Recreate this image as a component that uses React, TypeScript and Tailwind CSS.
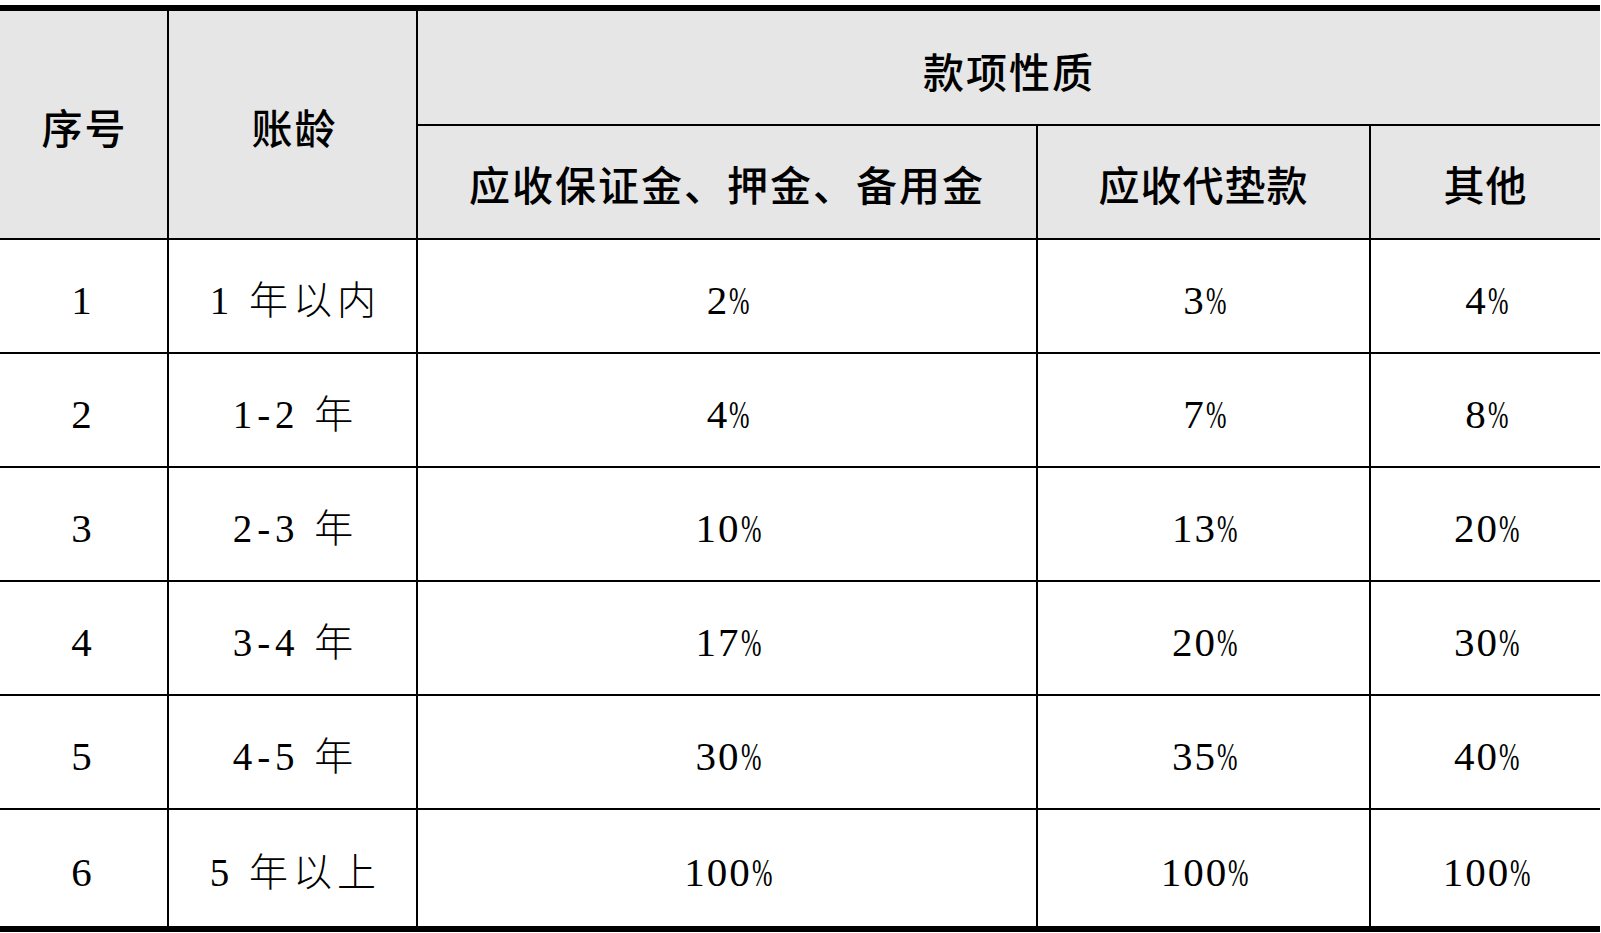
const serif = "font-[family-name:'Liberation_Serif','Times_New_Roman','Noto_Sans_CJK_SC',serif]"

const rows = [
  { no: '1', age: '1 年以内', a: '2', b: '3', c: '4' },
  { no: '2', age: '1-2 年', a: '4', b: '7', c: '8' },
  { no: '3', age: '2-3 年', a: '10', b: '13', c: '20' },
  { no: '4', age: '3-4 年', a: '17', b: '20', c: '30' },
  { no: '5', age: '4-5 年', a: '30', b: '35', c: '40' },
  { no: '6', age: '5 年以上', a: '100', b: '100', c: '100' },
]

function Pct({ value }: { value: string }) {
  return (
    <span className="inline-flex items-baseline tracking-[2px]">
      {value}
      <span className="inline-block w-[18px] origin-left scale-x-[0.6]">%</span>
    </span>
  )
}

export default function App() {
  return (
    <div className={`w-[1601px] h-[933px] bg-white pt-[5px] text-black ${serif}`}>
      <div className="w-[1600px] border-y-[6px] border-black">
        {/* header */}
        <div className="flex h-[229px] bg-[#e6e6e6] border-b-2 border-black text-[41px] font-medium">
          <div className="w-[169px] border-r-2 border-black flex items-center justify-center tracking-[2px] pl-[2px] pt-[12px]">
            序号
          </div>
          <div className="w-[249px] border-r-2 border-black flex items-center justify-center tracking-[2px] pl-[4px] pt-[12px]">
            账龄
          </div>
          <div className="flex-1 flex flex-col">
            <div className="h-[115px] border-b-2 border-black flex items-center justify-center tracking-[2px] pt-[14px]">
              款项性质
            </div>
            <div className="flex-1 flex">
              <div className="w-[620px] border-r-2 border-black flex items-center justify-center tracking-[2px] pt-[12px]">
                应收保证金、押金、备用金
              </div>
              <div className="w-[333px] border-r-2 border-black flex items-center justify-center tracking-[1px] pt-[12px]">
                应收代垫款
              </div>
              <div className="flex-1 flex items-center justify-center tracking-[1px] pt-[12px]">
                其他
              </div>
            </div>
          </div>
        </div>

        {/* body */}
        {rows.map((r, i) => (
          <div
            key={r.no}
            className={`flex text-[41px] ${i < rows.length - 1 ? 'h-[114px] border-b-2 border-black' : 'h-[116px]'}`}
          >
            <div className="w-[169px] border-r-2 border-black flex items-center justify-center pr-[4px] pt-[10px]">
              {r.no}
            </div>
            <div className="w-[249px] border-r-2 border-black flex items-center justify-center font-light tracking-[5px] text-[39px] pt-[10px] pl-[6px]">
              {r.age}
            </div>
            <div className="w-[620px] border-r-2 border-black flex items-center justify-center pt-[10px]">
              <Pct value={r.a} />
            </div>
            <div className="w-[333px] border-r-2 border-black flex items-center justify-center pt-[10px]">
              <Pct value={r.b} />
            </div>
            <div className="flex-1 flex items-center justify-center pt-[10px]">
              <Pct value={r.c} />
            </div>
          </div>
        ))}
      </div>
    </div>
  )
}
